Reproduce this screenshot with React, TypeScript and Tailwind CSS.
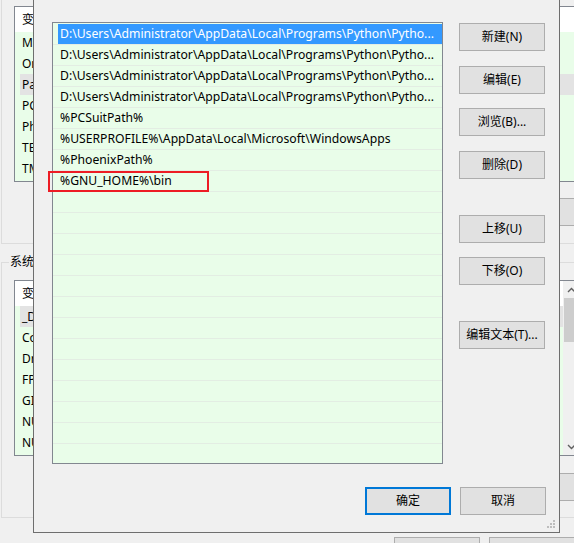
import React from "react";

const FONT = "[font-family:'Noto_Sans','Noto_Sans_CJK_SC',sans-serif]";

function Btn({ label, w = "w-[86px]", primary = false, className = "" }: { label: string; w?: string; primary?: boolean; className?: string }) {
  return (
    <div
      className={`${w} h-[28px] shrink-0 flex items-center justify-center bg-[#e1e1e1] text-[12px] leading-none text-black ${
        primary ? "border-2 border-[#0078d7]" : "border border-[#adadad]"
      } ${className}`}
    >
      {label}
    </div>
  );
}

function BgRow({ text, selected = false }: { text: string; selected?: boolean }) {
  return (
    <div className="h-[21px] shrink-0">
      <div className={`ml-[5px] h-[21px] pl-[2px] flex items-center whitespace-nowrap text-[12px] text-black ${selected ? "bg-[#e3e3e3]" : ""}`}>
        {text}
      </div>
    </div>
  );
}

const userVars = ["MOZ_PLUGIN_PATH", "OneDrive", "Path", "PCSuitPath", "PhoenixPath", "TEMP", "TMP"];
const sysVars = [
  "_DFX_INSTALL_UNSIGNED_DRIVER",
  "ComSpec",
  "DriverData",
  "FPS_BROWSER_APP_PROFILE_STRING",
  "GIT_HOME",
  "NUGET_PACKAGES",
  "NUMBER_OF_PROCESSORS",
];

const pathItems = [
  "D:\\Users\\Administrator\\AppData\\Local\\Programs\\Python\\Pytho...",
  "D:\\Users\\Administrator\\AppData\\Local\\Programs\\Python\\Pytho...",
  "D:\\Users\\Administrator\\AppData\\Local\\Programs\\Python\\Pytho...",
  "D:\\Users\\Administrator\\AppData\\Local\\Programs\\Python\\Pytho...",
  "%PCSuitPath%",
  "%USERPROFILE%\\AppData\\Local\\Microsoft\\WindowsApps",
  "%PhoenixPath%",
  "%GNU_HOME%\\bin",
];

export default function App() {
  const rows = Array.from({ length: 21 }, (_, i) => pathItems[i] ?? "");
  return (
    <div className={`relative w-[574px] h-[543px] overflow-hidden bg-[#f0f0f0] ${FONT}`}>
      {/* Background window: 环境变量 */}
      <div className="flex flex-col">
        {/* 用户变量 group */}
        <div className="ml-px -mt-[10px] w-[640px] h-[254px] border border-[#dcdcdc] pt-[15px] pl-[12px] flex flex-col">
          <div className="w-[567px] h-[176px] border border-[#828790] bg-[#e9fde9] flex flex-col overflow-hidden">
            <div className="h-[25px] shrink-0 bg-white pl-[7px] flex items-center text-[12px] text-black">变量</div>
            {userVars.map((v, i) => (
              <BgRow key={v} text={v} selected={i === 2} />
            ))}
          </div>
          <div className="w-[567px] mt-[16px] flex justify-end gap-[9px]">
            <Btn label="新建(N)..." />
            <Btn label="编辑(E)..." />
            <Btn label="删除(D)" />
          </div>
        </div>

        {/* 系统变量 group */}
        <div className="relative ml-px mt-[18px] w-[640px] h-[256px] border border-[#dcdcdc] pt-[17px] pl-[12px] flex flex-col">
          <span className="absolute -top-[9px] left-[7px] px-[1px] bg-[#f0f0f0] text-[12px] leading-[16px] text-black">系统变量(S)</span>
          <div className="w-[567px] h-[176px] border border-[#828790] bg-[#e9fde9] flex overflow-hidden">
            <div className="flex-1 flex flex-col overflow-hidden">
              <div className="h-[25px] shrink-0 bg-white pl-[7px] flex items-center text-[12px] text-black">变量</div>
              {sysVars.map((v, i) => (
                <BgRow key={v} text={v} selected={i === 0} />
              ))}
            </div>
            <div className="w-[17px] shrink-0 bg-[#f0f0f0] flex flex-col">
              <div className="h-[17px] flex items-center justify-center">
                <svg width="9" height="6" viewBox="0 0 9 6">
                  <path d="M1 5 L4.5 1.5 L8 5" fill="none" stroke="#606060" strokeWidth="1.4" />
                </svg>
              </div>
              <div className="mx-[1px] h-[44px] bg-[#cdcdcd]" />
              <div className="flex-1" />
              <div className="h-[17px] flex items-center justify-center">
                <svg width="9" height="6" viewBox="0 0 9 6">
                  <path d="M1 1 L4.5 4.5 L8 1" fill="none" stroke="#606060" strokeWidth="1.4" />
                </svg>
              </div>
            </div>
          </div>
          <div className="w-[567px] mt-[17px] flex justify-end gap-[9px]">
            <Btn label="新建(W)..." />
            <Btn label="编辑(I)..." />
            <Btn label="删除(L)" />
          </div>
        </div>

        {/* bottom buttons of the background window (only their tops show) */}
        <div className="ml-[394px] mt-[19px] flex gap-[9px]">
          <Btn label="" />
          <Btn label="" />
        </div>
      </div>

      {/* Foreground dialog: 编辑环境变量 */}
      <div className="absolute left-[33px] -top-[30px] w-[527px] h-[563px] border border-[#6e6e6e] bg-[#f0f0f0] pt-[51px] pl-[18px] pr-[13px] flex flex-col">
        <div className="flex">
          <div className="relative w-[391px] h-[442px] shrink-0 border border-[#828790] bg-[#e9fde9] pt-[1px] flex flex-col overflow-hidden">
            {rows.map((t, i) => (
              <div key={i} className="h-[21px] shrink-0 border-b border-[#e3ede3]">
                <div
                  className={`ml-[5px] h-[20px] pl-[2px] pt-[1px] flex items-center whitespace-nowrap text-[12.2px] ${
                    i === 0 ? "bg-[#3399ff] text-white" : "text-black"
                  }`}
                >
                  {t}
                </div>
              </div>
            ))}
          </div>
          <div className="ml-[16px] pt-[1px] flex flex-col">
            <Btn label="新建(N)" />
            <Btn label="编辑(E)" className="mt-[15px]" />
            <Btn label="浏览(B)..." className="mt-[14px]" />
            <Btn label="删除(D)" className="mt-[15px]" />
            <Btn label="上移(U)" className="mt-[36px]" />
            <Btn label="下移(O)" className="mt-[14px]" />
            <Btn label="编辑文本(T)..." className="mt-[36px]" />
          </div>
        </div>
        <div className="mt-[23px] flex justify-end gap-[9px]">
          <Btn label="确定" primary />
          <Btn label="取消" />
        </div>
        {/* resize grip */}
        <svg className="absolute right-[3px] bottom-[3px]" width="10" height="10" viewBox="0 0 10 10">
          <rect x="7" y="1" width="2" height="2" fill="#bdbdbd" />
          <rect x="4" y="4" width="2" height="2" fill="#bdbdbd" />
          <rect x="7" y="4" width="2" height="2" fill="#bdbdbd" />
          <rect x="1" y="7" width="2" height="2" fill="#bdbdbd" />
          <rect x="4" y="7" width="2" height="2" fill="#bdbdbd" />
          <rect x="7" y="7" width="2" height="2" fill="#bdbdbd" />
        </svg>

        {/* red annotation box */}
        <div className="absolute left-[14px] top-[200px] w-[161px] h-[21px] border-2 border-[#ed1c24]" />
      </div>
    </div>
  );
}
